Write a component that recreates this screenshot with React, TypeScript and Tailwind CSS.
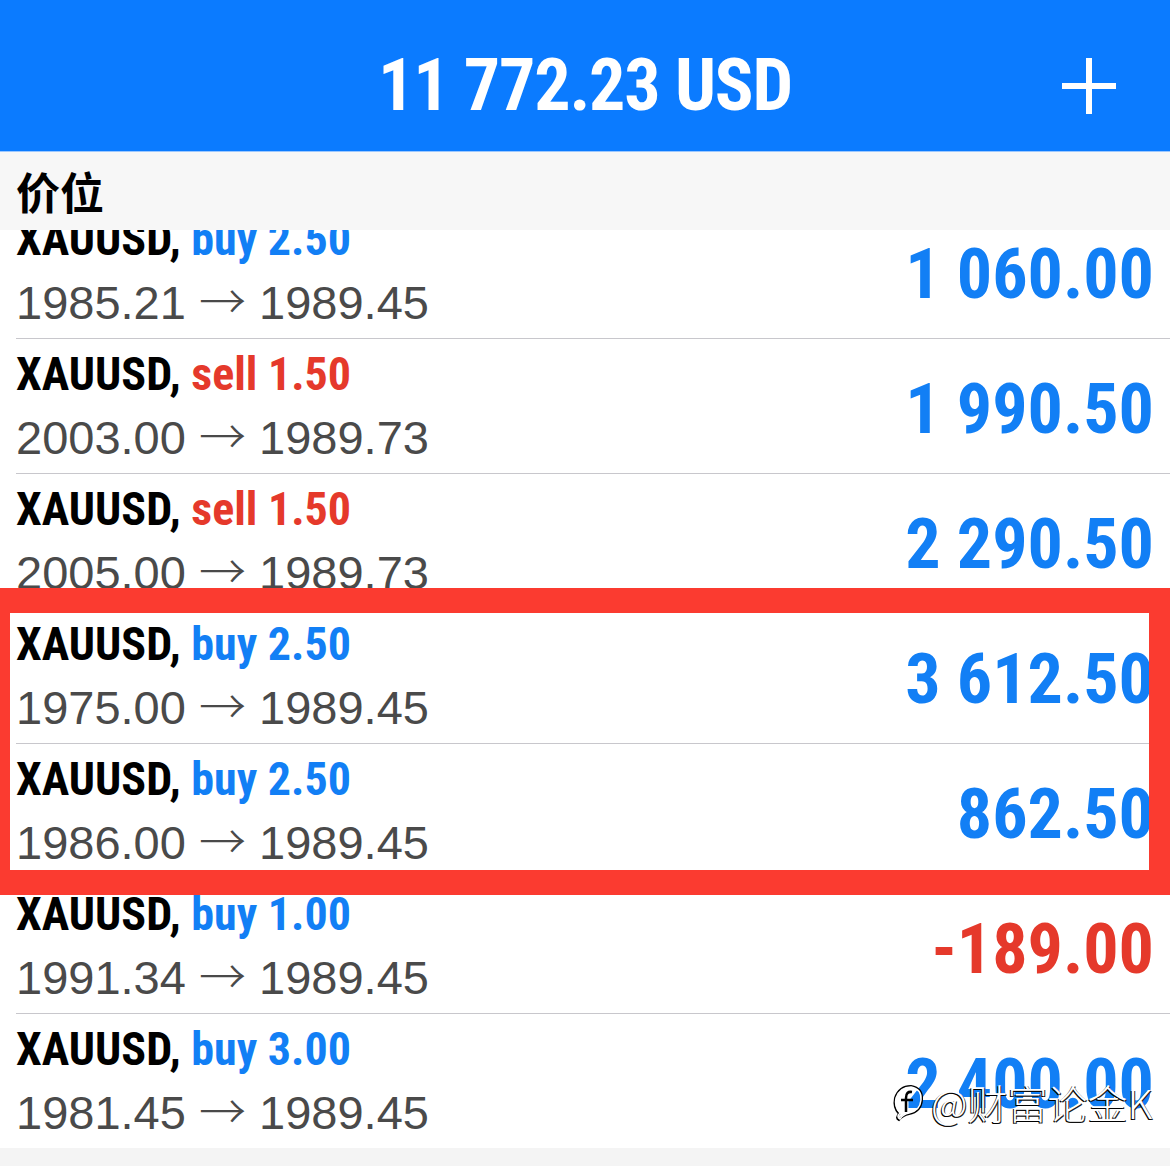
import React from "react";

interface Position {
  symbol: string;
  side: "buy" | "sell";
  volume: string;
  open: string;
  current: string;
  profit: string;
}

const positions: Position[] = [
  { symbol: "XAUUSD", side: "buy", volume: "2.50", open: "1985.21", current: "1989.45", profit: "1 060.00" },
  { symbol: "XAUUSD", side: "sell", volume: "1.50", open: "2003.00", current: "1989.73", profit: "1 990.50" },
  { symbol: "XAUUSD", side: "sell", volume: "1.50", open: "2005.00", current: "1989.73", profit: "2 290.50" },
  { symbol: "XAUUSD", side: "buy", volume: "2.50", open: "1975.00", current: "1989.45", profit: "3 612.50" },
  { symbol: "XAUUSD", side: "buy", volume: "2.50", open: "1986.00", current: "1989.45", profit: "862.50" },
  { symbol: "XAUUSD", side: "buy", volume: "1.00", open: "1991.34", current: "1989.45", profit: "-189.00" },
  { symbol: "XAUUSD", side: "buy", volume: "3.00", open: "1981.45", current: "1989.45", profit: "2 400.00" },
];

const condensed = "font-['Roboto_Condensed','Liberation_Sans',sans-serif]";

function PositionRow({ p }: { p: Position }) {
  const loss = p.profit.startsWith("-");
  return (
    <div className="relative h-[135px] bg-white flex items-center justify-between pl-4 pr-[16px]">
      <div className="flex flex-col self-start pt-[4px]">
        <div className={`${condensed} text-[46px] leading-[63px] font-bold text-black whitespace-nowrap`}>
          {p.symbol},{" "}
          <span className={p.side === "buy" ? "text-[#127ff5]" : "text-[#e5392b]"}>
            {p.side} {p.volume}
          </span>
        </div>
        <div className="h-[63px] font-['Liberation_Sans',sans-serif] text-[47px] leading-[63px] text-[#4a4a4a] whitespace-nowrap">
          {p.open}{" "}
          <span className="font-['Noto_Sans_CJK_SC',sans-serif] font-light leading-none">→</span>{" "}
          {p.current}
        </div>
      </div>
      <div
        className={`${condensed} text-[70px] leading-none font-bold pt-[5px] ${
          loss ? "text-[#e5392b]" : "text-[#127ff5]"
        }`}
      >
        {p.profit}
      </div>
      <div className="absolute left-4 right-0 bottom-0 h-px bg-[#c8c7cc]" />
    </div>
  );
}

export default function App() {
  return (
    <div className="relative w-[1170px] h-[1166px] overflow-hidden bg-[#f4f4f4]">
      <header className="h-[152px] bg-[#0b7bff] grid grid-cols-[1fr_auto_1fr] items-center pt-[20px] border-b border-[#9cc8ff]">
        <div />
        <h1 className={`${condensed} text-[72px] leading-none font-bold tracking-[-1.2px] text-white`}>
          11 772.23 USD
        </h1>
        <div className="flex justify-end pr-[54px]">
          <svg width="54" height="56" viewBox="0 0 54 56" className="text-white">
            <path d="M27 0v56M0 28h54" stroke="currentColor" strokeWidth="6" />
          </svg>
        </div>
      </header>

      <div className="relative z-10 h-[78px] bg-[#f7f7f7] flex items-center pl-4">
        <span className="font-['Noto_Sans_CJK_SC',sans-serif] text-[44px] font-bold text-black leading-none">
          价位
        </span>
      </div>

      <div className="h-[918px] overflow-hidden">
        <div className="-mt-[26px]">
          {positions.map((p, i) => (
            <PositionRow key={i} p={p} />
          ))}
        </div>
      </div>

      {/* highlight box drawn over the list */}
      <div className="absolute left-0 right-0 top-[588px] h-[307px] border-t-[25px] border-b-[25px] border-l-[10px] border-r-[21px] border-[#fb3b30]" />

      {/* watermark */}
      <div className="absolute left-[891px] top-[1072px] flex items-center gap-[6px] font-['Noto_Sans_CJK_SC',sans-serif] font-light text-[40px] text-white [text-shadow:-1px_1px_0_#000,1px_1px_0_#222]">
        <svg width="34" height="44" viewBox="0 0 34 44">
          <path
            d="M8 40 Q4 38 8 34 Q2 28 4 18 Q8 6 20 6 Q32 8 31 20 Q30 32 18 34 Q12 35 8 40Z"
            fill="none"
            stroke="#000"
            strokeWidth="2"
          />
          <path
            d="M9 39 Q5 37 9 33 Q3 27 5 18 Q9 7 20 7 Q31 9 30 20 Q29 31 18 33 Q12 34 9 39Z"
            fill="none"
            stroke="#fff"
            strokeWidth="1.5"
          />
          <path d="M21 12 Q15 11 15 18 V32 M10 20 H22" fill="none" stroke="#000" strokeWidth="2.5" />
        </svg>
        <span>@财富论金K</span>
      </div>
    </div>
  );
}
